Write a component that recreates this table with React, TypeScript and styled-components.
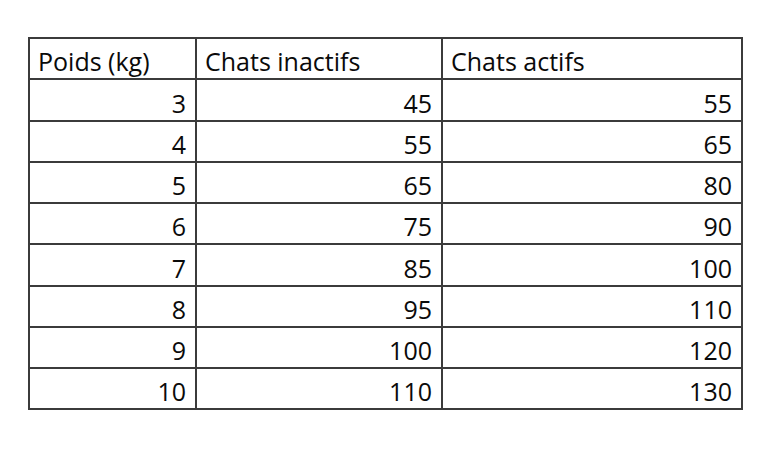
import React from 'react';
import styled, { createGlobalStyle } from 'styled-components';

const GlobalStyle = createGlobalStyle`
  html, body {
    margin: 0;
    padding: 0;
    background: #ffffff;
  }
  body {
    font-family: "Open Sans", "Liberation Sans", sans-serif;
    color: #0a0a0a;
  }
`;

const Page = styled.div`
  width: 780px;
  height: 451px;
  padding: 37px 0 0 28px;
  box-sizing: border-box;
`;

const Table = styled.table`
  border-collapse: collapse;
  width: 715px;
  table-layout: fixed;
`;

const Cell = styled.td<{ $align?: 'left' | 'right' }>`
  box-sizing: border-box;
  border: 2px solid #3b3b3b;
  height: 41.25px;
  padding: 0 9px 1px 8px;
  font-size: 25px;
  font-weight: 400;
  line-height: 31px;
  vertical-align: bottom;
  text-align: ${({ $align }) => $align || 'right'};
`;

const rows = [
  [3, 45, 55],
  [4, 55, 65],
  [5, 65, 80],
  [6, 75, 90],
  [7, 85, 100],
  [8, 95, 110],
  [9, 100, 120],
  [10, 110, 130],
];

export default function App() {
  return (
    <Page>
      <GlobalStyle />
      <Table>
        <colgroup>
          <col style={{ width: 167 }} />
          <col style={{ width: 246 }} />
          <col />
        </colgroup>
        <thead>
          <tr>
            <Cell as="th" $align="left">Poids (kg)</Cell>
            <Cell as="th" $align="left">Chats inactifs</Cell>
            <Cell as="th" $align="left">Chats actifs</Cell>
          </tr>
        </thead>
        <tbody>
          {rows.map((r) => (
            <tr key={r[0]}>
              {r.map((v, i) => (
                <Cell key={i}>{v}</Cell>
              ))}
            </tr>
          ))}
        </tbody>
      </Table>
    </Page>
  );
}
